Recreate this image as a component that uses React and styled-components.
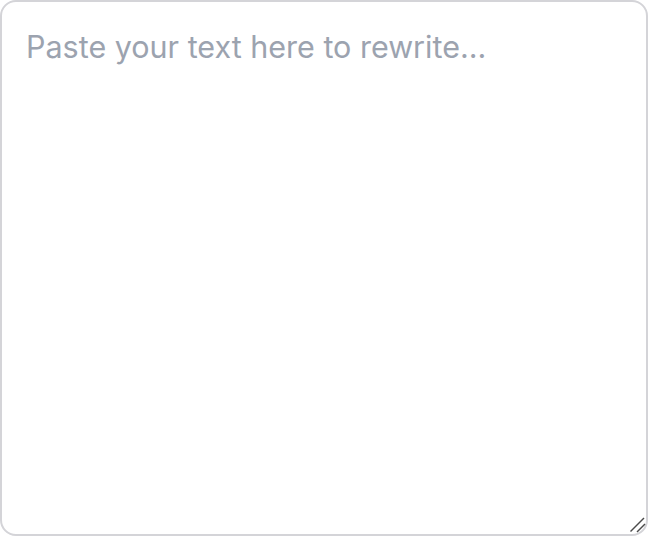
import React, { useState } from 'react';
import styled, { createGlobalStyle } from 'styled-components';

const Global = createGlobalStyle`
  html, body { margin: 0; padding: 0; background: #ffffff; }
  #root { width: 648px; height: 536px; }
`

const Wrap = styled.div`
  position: relative;
  width: 648px;
  height: 536px;
  box-sizing: border-box;
`

const Area = styled.textarea`
  display: block;
  width: 100%;
  height: 100%;
  box-sizing: border-box;
  border: 2px solid #d4d4d8;
  border-radius: 16px;
  padding: 24px 24px;
  font-family: Inter, "Noto Sans", sans-serif;
  font-size: 30.5px;
  line-height: 1.35;
  color: #111827;
  background: #fff;
  outline: none;
  resize: none;
  &::placeholder { color: #9ca3af; }
`

// drawn grip, sits over the textarea corner
const Grip = styled.svg`
  position: absolute;
  right: 2px;
  bottom: 3px;
  width: 17px;
  height: 17px;
  pointer-events: none;
`

const App = () => {
  const [text, setText] = useState('');
  return (
    <Wrap>
      <Global />
      <Area
        value={text}
        onChange={e => setText(e.target.value)}
        placeholder='Paste your text here to rewrite...'
      />
      <Grip viewBox='0 0 17 17'>
        <line x1='1.5' y1='15.5' x2='15' y2='2' stroke='#4b4b4b' strokeWidth='1.4' />
        <line x1='8' y1='16' x2='16' y2='8' stroke='#4b4b4b' strokeWidth='1.4' />
      </Grip>
    </Wrap>
  )
}

export default App
